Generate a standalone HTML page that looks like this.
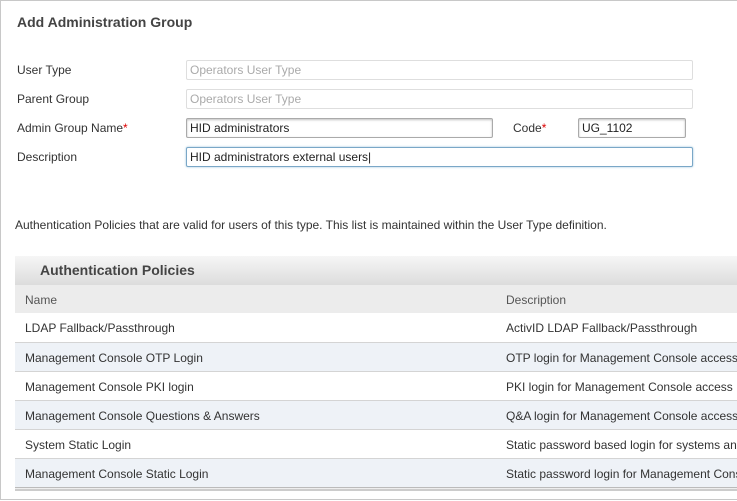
<!DOCTYPE html>
<html><head><style>
*{margin:0;padding:0;box-sizing:border-box}
body{width:737px;height:501px;overflow:hidden;background:#fff;font-family:"Liberation Sans",Arial,sans-serif;font-size:12px;color:#333;position:relative}
.frame{position:absolute;left:0;top:0;width:737px;height:500px;border:1px solid #c8c8c8;border-right:none}
.abs{position:absolute;white-space:nowrap}
h1{position:absolute;left:17px;top:14px;font-size:14px;font-weight:bold;color:#444}
.lbl{position:absolute;left:17px;font-size:12px;color:#333}
.req{color:#d00}
.in{position:absolute;height:20px;border:1px solid #ccc;border-radius:2px;font-size:12px;padding:2px 3px;line-height:14px;color:#222;background:#fff}
.dis{color:#aaa;border-color:#dedede}
.txt{box-shadow:inset 0 1px 2px rgba(0,0,0,.25);border-color:#aaa}
.foc{border-color:#7aa7c7;box-shadow:0 0 2px #9cc3dd}
.tbl{position:absolute;left:15px;top:256px;width:722px}
.th{height:29px;background:linear-gradient(#f6f6f6,#dcdcdc);font-weight:bold;font-size:14px;color:#444;padding:6px 0 0 25px}
.ch{height:28px;background:#ececec;color:#555;position:relative}
.row{height:29px;border-top:1px solid #d4d4d4;position:relative}
.row.alt{background:#eef2f7}
.c1{position:absolute;left:10px;top:8px}
.c2{position:absolute;left:491px;top:8px;white-space:nowrap}
</style></head><body>
<div class="frame"></div>
<h1>Add Administration Group</h1>
<div class="lbl" style="top:63px">User Type</div>
<div class="lbl" style="top:92px">Parent Group</div>
<div class="lbl" style="top:121px">Admin Group Name<span class="req">*</span></div>
<div class="lbl" style="top:150px">Description</div>
<div class="in dis" style="left:186px;top:60px;width:507px">Operators User Type</div>
<div class="in dis" style="left:186px;top:89px;width:507px">Operators User Type</div>
<div class="in txt" style="left:186px;top:118px;width:307px">HID administrators</div>
<div class="abs" style="left:513px;top:121px">Code<span class="req">*</span></div>
<div class="in txt" style="left:578px;top:118px;width:108px">UG_1102</div>
<div class="in foc" style="left:186px;top:147px;width:507px">HID administrators external users|</div>
<div class="abs" style="left:15px;top:218px">Authentication Policies that are valid for users of this type. This list is maintained within the User Type definition.</div>
<div class="tbl">
<div class="th">Authentication Policies</div>
<div class="ch"><span class="c1">Name</span><span class="c2">Description</span></div>
<div class="row" style="border-top:none"><span class="c1">LDAP Fallback/Passthrough</span><span class="c2">ActivID LDAP Fallback/Passthrough</span></div>
<div class="row alt"><span class="c1">Management Console OTP Login</span><span class="c2">OTP login for Management Console access</span></div>
<div class="row"><span class="c1">Management Console PKI login</span><span class="c2">PKI login for Management Console access</span></div>
<div class="row alt"><span class="c1">Management Console Questions &amp; Answers</span><span class="c2">Q&amp;A login for Management Console access</span></div>
<div class="row"><span class="c1">System Static Login</span><span class="c2">Static password based login for systems and</span></div>
<div class="row alt"><span class="c1">Management Console Static Login</span><span class="c2">Static password login for Management Console</span></div>
<div style="height:4px;border-top:1px solid #bbb;border-bottom:2px solid #ccc;background:#eee"></div>
</div>
</body></html>
